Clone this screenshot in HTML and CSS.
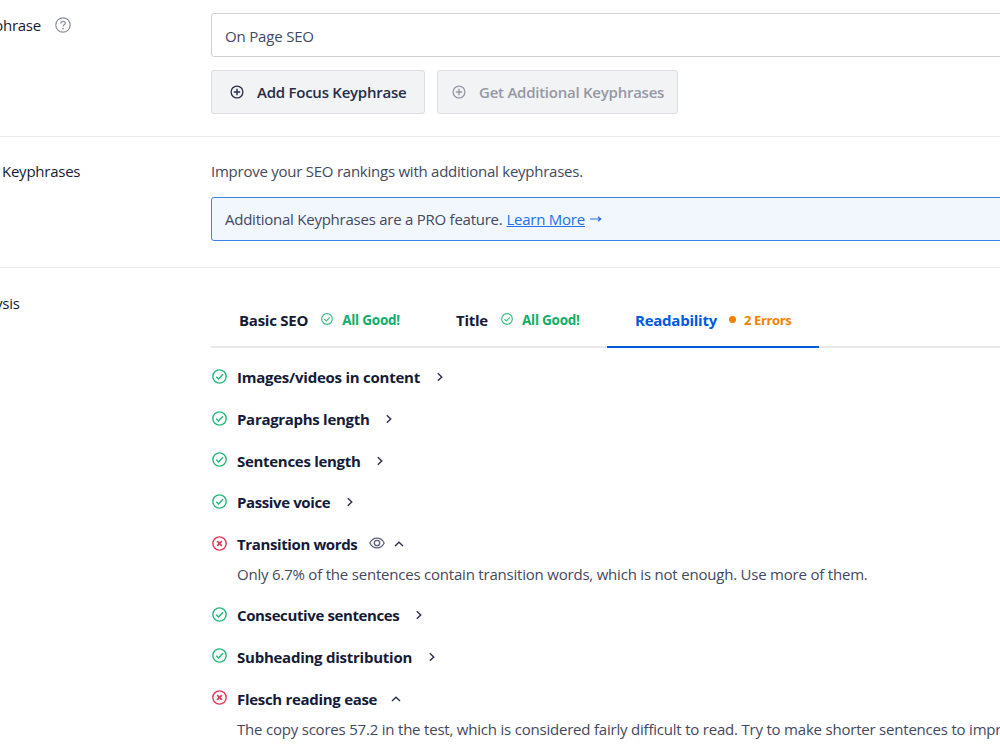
FILE: index.html
```
<!DOCTYPE html>
<html lang="en">
<head>
<meta charset="utf-8">
<title>SEO settings</title>
<link rel="stylesheet" href="styles.css">
</head>
<body>
<svg class="sprite" aria-hidden="true">
  <symbol id="ok" viewBox="0 0 16 16"><circle cx="8" cy="8" r="7.1" fill="none" stroke="currentColor" stroke-width="1.5"/><path d="M4.5 8.2 7 10.7 11.7 5.7" fill="none" stroke="currentColor" stroke-width="1.5"/></symbol>
  <symbol id="bad" viewBox="0 0 16 16"><circle cx="8" cy="8" r="7.1" fill="none" stroke="currentColor" stroke-width="1.5"/><path d="M5.5 5.5l5 5M10.5 5.5l-5 5" fill="none" stroke="currentColor" stroke-width="1.7"/></symbol>
  <symbol id="plus" viewBox="0 0 14 14"><circle cx="7" cy="7" r="5.9" fill="none" stroke="currentColor" stroke-width="1.3"/><path d="M7 3.8v6.4M3.8 7h6.4" fill="none" stroke="currentColor" stroke-width="1.4"/></symbol>
  <symbol id="right" viewBox="0 0 8 10"><path d="M1.8 1.2 5.7 5 1.8 8.8" fill="none" stroke="currentColor" stroke-width="1.5"/></symbol>
  <symbol id="up" viewBox="0 0 10 8"><path d="M1 6 5 2.2 9 6" fill="none" stroke="currentColor" stroke-width="1.5"/></symbol>
</svg>
<main class="panel">
  <section class="row row-focus">
    <div class="label label-focus"><span class="cut-p">phrase</span>
      <svg class="help" viewBox="0 0 16 16"><circle cx="8" cy="8" r="7.2" fill="none" stroke="currentColor" stroke-width="1.2"/><path d="M5.7 6.5C5.7 5.1 6.7 4.3 8 4.3s2.3.8 2.3 2c0 1.5-2.2 1.6-2.2 3.2" fill="none" stroke="currentColor" stroke-width="1.2"/><circle cx="8.1" cy="11.5" r=".85" fill="currentColor"/></svg>
    </div>
    <div class="content">
      <div class="input"><span class="t-input">On Page SEO</span></div>
      <div class="buttons">
        <div class="btn btn-add"><svg class="i-plus"><use href="#plus"/></svg><span>Add Focus Keyphrase</span></div>
        <div class="btn btn-get"><svg class="i-plus"><use href="#plus"/></svg><span>Get Additional Keyphrases</span></div>
      </div>
    </div>
  </section>
  <section class="row row-additional">
    <div class="label label-additional"><span>Keyphrases</span></div>
    <div class="content">
      <p class="intro">Improve your SEO rankings with additional keyphrases.</p>
      <div class="notice"><span>Additional Keyphrases are a PRO feature.</span><a class="learn">Learn More</a><svg class="arrow" viewBox="0 0 12 8"><path d="M0 4h10.5M8 1.7 10.8 4 8 6.3" fill="none" stroke="currentColor" stroke-width="1.2"/></svg></div>
    </div>
  </section>
  <section class="row row-analysis">
    <div class="label label-analysis"><span class="cut-y">ysis</span></div>
    <div class="content">
      <nav class="tabs">
        <div class="tab tab-basic"><b>Basic SEO</b><svg class="i-small"><use href="#ok"/></svg><span class="good">All Good!</span></div>
        <div class="tab tab-title"><b>Title</b><svg class="i-small"><use href="#ok"/></svg><span class="good">All Good!</span></div>
        <div class="tab tab-active"><b>Readability</b><i class="dot"></i><span class="errors">2 Errors</span></div>
      </nav>
      <ul class="checks">
        <li><div class="head"><svg class="state ok"><use href="#ok"/></svg><b>Images/videos in content</b><svg class="i-right"><use href="#right"/></svg></div></li>
        <li><div class="head"><svg class="state ok"><use href="#ok"/></svg><b class="snug">Paragraphs length</b><svg class="i-right"><use href="#right"/></svg></div></li>
        <li><div class="head"><svg class="state ok"><use href="#ok"/></svg><b class="snug">Sentences length</b><svg class="i-right"><use href="#right"/></svg></div></li>
        <li><div class="head"><svg class="state ok"><use href="#ok"/></svg><b class="tight">Passive voice</b><svg class="i-right"><use href="#right"/></svg></div></li>
        <li><div class="head"><svg class="state bad"><use href="#bad"/></svg><b class="tight">Transition words</b><svg class="eye" viewBox="0 0 16 12"><path d="M.8 6C2.3 3 4.9 1.1 8 1.1S13.700 3 15.200 6C13.700 9 11.100 10.900 8 10.900S2.300 9 .8 6Z" fill="none" stroke="currentColor" stroke-width="1.2"/><circle cx="8" cy="6" r="2.7" fill="none" stroke="currentColor" stroke-width="1.3"/></svg><svg class="i-up"><use href="#up"/></svg></div>
          <p class="desc">Only 6.7% of the sentences contain transition words, which is not enough. Use more of them.</p></li>
        <li><div class="head"><svg class="state ok"><use href="#ok"/></svg><b class="tight">Consecutive sentences</b><svg class="i-right"><use href="#right"/></svg></div></li>
        <li><div class="head"><svg class="state ok"><use href="#ok"/></svg><b>Subheading distribution</b><svg class="i-right"><use href="#right"/></svg></div></li>
        <li><div class="head"><svg class="state bad"><use href="#bad"/></svg><b class="snug">Flesch reading ease</b><svg class="i-up i-up-wide"><use href="#up"/></svg></div>
          <p class="desc">The copy scores 57.2 in the test, which is considered fairly difficult to read. Try to make shorter sentences to impr</p></li>
      </ul>
    </div>
  </section>
</main>
</body>
</html>
```
FILE: styles.css
```
* { box-sizing: border-box; }
body { margin: 0; background: #fff; overflow: hidden; font: 15px/20px "Open Sans", "Noto Sans", sans-serif; letter-spacing: -.245px; color: #434960; }
p, ul { margin: 0; padding: 0; list-style: none; }
svg { flex: none; display: block; }
p, span, a, b { white-space: nowrap; }
.sprite { position: absolute; width: 0; height: 0; }
.panel { height: 750px; overflow: hidden; }
.row { display: grid; grid-template-columns: 211px 820px; border-bottom: 1px solid #e8e8eb; }
.row-focus { height: 137px; padding-top: 13px; }
.row-additional { height: 131px; padding-top: 24px; }
.row-analysis { border: 0; padding-top: 25px; }
.label { display: flex; align-items: center; height: 20px; color: #141b38; font-weight: 500; overflow: hidden; }
.label-focus { margin-top: 2px; gap: 14px; }
.cut-p { margin-left: -6px; width: 47px; }
.label-additional { padding-left: 2px; }
.cut-y { margin-left: -5px; }
.help { width: 16px; height: 16px; color: #8c8f9a; }
.input { display: flex; align-items: center; height: 44px; padding: 1px 13px 0; border: 1px solid #d0d1d7; border-radius: 3px; }
.t-input { letter-spacing: -.18px; }
.buttons { display: flex; gap: 12px; margin-top: 13px; }
.btn { display: flex; align-items: center; height: 44px; border: 1px solid #dcdde1; border-radius: 3px; background: #f2f3f5; font-weight: 600; color: #262d48; }
.btn span { margin-top: -1px; }
.btn-add { width: 214px; padding-left: 18px; gap: 13px; }
.btn-get { width: 241px; padding-left: 14px; gap: 13px; color: #9598a5; }
.i-plus { width: 14px; height: 14px; }
.notice { display: flex; align-items: center; height: 44px; margin-top: 16px; padding: 0 0 1px 13px; border: 1px solid #3d82ec; border-radius: 3px; background: #f2f6fd; }
.learn { margin-left: 4px; color: #2271ed; text-decoration: underline; text-underline-offset: 1px; }
.arrow { width: 12px; height: 8px; margin: 1px 0 0 5px; color: #2271ed; }
.tabs { display: flex; height: 54.5px; border-bottom: 2px solid #e8e8eb; color: #141b38; }
.tab { display: flex; align-items: center; height: 55px; padding-bottom: 2px; }
.tab-basic { padding-left: 28px; width: 245px; }
.tab-title { width: 151px; }
.tab-active { width: 212px; padding: 0 0 0 28px; border-bottom: 2px solid #005ae0; color: #005ae0; }
.i-small { width: 12px; height: 12px; margin: -1px 9px 0 13px; color: #38bf80; }
.good, .errors { font-size: 13.5px; font-weight: 700; letter-spacing: -.25px; color: #12ad68; }
.errors { font-size: 13px; letter-spacing: -.35px; color: #f18200; }
.dot { width: 7px; height: 7px; margin: -1px 8px 0 12px; border-radius: 50%; background: #f18200; }
.checks { padding-top: 9.5px; }
.head { display: flex; align-items: center; height: 41.7px; color: #141b38; }
.head b { margin-top: -1px; }
.snug { letter-spacing: -.3px; }
.tight { letter-spacing: -.38px; }
.state { width: 15px; height: 15px; margin: -3px 10px 0 1px; }
.ok { color: #25b979; }
.bad { color: #e33555; }
.i-right { width: 8px; height: 10px; margin: -1px 0 0 16px; color: #30364f; }
.i-up { width: 10px; height: 8px; margin: -1px 0 0 9px; color: #30364f; }
.i-up-wide { margin-left: 14px; }
.eye { width: 16px; height: 12px; margin: -3px 0 0 12px; color: #5a6078; }
.desc { height: 29.5px; margin-top: -1px; margin-bottom: 1px; padding-left: 26px; letter-spacing: -.208px; }
```
